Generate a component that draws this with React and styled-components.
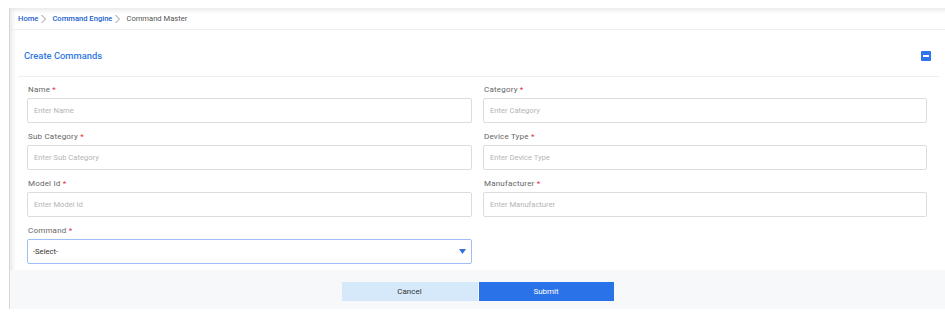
import React from "react";
import styled, { createGlobalStyle } from "styled-components";

const Global = createGlobalStyle`
  html, body { margin: 0; padding: 0; overflow: hidden; background: #fff; }
  * { box-sizing: border-box; }
  body { font-family: Roboto, "Liberation Sans", Arial, sans-serif; }
`;

const Scroller = styled.div`
  height: 100vh;
  overflow-y: scroll;
  &::-webkit-scrollbar { width: 3px; }
  &::-webkit-scrollbar-track { background: #f1f1f1; }
  &::-webkit-scrollbar-thumb { background: #8c8c8c; }
`;

const Page = styled.div`
  min-height: 527px;
  padding: 8px 0 0 9px;
`;

const Panel = styled.div`
  background: #fff;
  border-left: 1px solid #d6d6d6;
  box-shadow: inset 3px 3px 5px -1px rgba(0, 0, 0, 0.1);
`;

const Crumbs = styled.nav`
  height: 22px;
  display: flex;
  align-items: center;
  padding-left: 8px;
  border-bottom: 1px solid #efefef;
  font-size: 7.6px;
  gap: 2px;
`;

const Crumb = styled.span`
  color: ${(p) => (p.$active ? "#555" : "#1d5fd1")};
  font-weight: ${(p) => (p.$active ? 400 : 500)};
`;

const Sep = styled.svg`
  width: 7px;
  height: 10px;
  margin-right: 3px;
`;

const Card = styled.section`
  margin: 0 6px 0 8px;
`;

const CardHead = styled.div`
  display: flex;
  align-items: center;
  justify-content: space-between;
  padding: 19px 8px 13px 6px;
  border-bottom: 1px solid #eeeeee;
`;

const Title = styled.h2`
  margin: 0;
  font-size: 9.4px;
  line-height: 14px;
  font-weight: 500;
  color: #2f78e4;
`;

const Collapse = styled.button`
  width: 10px;
  height: 10px;
  padding: 0;
  border: none;
  border-radius: 1px;
  background: #2f74ec;
  display: flex;
  align-items: center;
  justify-content: center;
  &::after {
    content: "";
    width: 6px;
    height: 1.6px;
    background: #fff;
  }
`;

const Form = styled.div`
  display: grid;
  grid-template-columns: 445px 444px;
  column-gap: 11px;
  row-gap: 7px;
  padding: 6px 9px 6px 9px;
`;

const Field = styled.div`
  display: flex;
  flex-direction: column;
  gap: 3px;
`;

const Label = styled.label`
  font-size: 8px;
  line-height: 12px;
  color: #666;
  font-weight: 400;
  padding: 1px 0 0 1px;
  margin-bottom: -1px;
  letter-spacing: 0.2px;
  & span { color: #e0303a; }
`;

const Input = styled.input`
  height: 25px;
  border: 1px solid #dcdcdc;
  border-radius: 2px;
  padding: 0 6px;
  font-family: inherit;
  font-size: 7.6px;
  color: #333;
  outline: none;
  &::placeholder { color: #b5b5b5; }
`;

const SelectBox = styled.div`
  height: 25px;
  border: 1px solid #9cc0f5;
  border-radius: 2px;
  padding: 0 5px 0 5px;
  display: flex;
  align-items: center;
  justify-content: space-between;
  font-size: 7.6px;
  color: #333;
`;

const Footer = styled.div`
  background: #f7f8fa;
  padding: 12px 0 8px;
  display: flex;
  justify-content: center;
  gap: 1px;
`;

const Button = styled.button`
  width: ${(p) => (p.$primary ? "135px" : "136px")};
  height: 19px;
  border: 1px solid ${(p) => (p.$primary ? "#2a72e8" : "#d6e9fb")};
  background: ${(p) => (p.$primary ? "#2a72e8" : "#d6e9fb")};
  color: ${(p) => (p.$primary ? "#fff" : "#333")};
  font-family: inherit;
  font-size: 8px;
  padding: 0;
`;

const Chevron = () => (
  <Sep viewBox="0 0 7 10">
    <path d="M1.5 1 L5.5 5 L1.5 9" fill="none" stroke="#8a8a8a" strokeWidth="0.9" />
  </Sep>
);

const fields = [
  ["Name", "Enter Name"],
  ["Category", "Enter Category"],
  ["Sub Category", "Enter Sub Category"],
  ["Device Type", "Enter Device Type"],
  ["Model Id", "Enter Model Id"],
  ["Manufacturer", "Enter Manufacturer"],
];

export default function App() {
  return (
    <>
      <Global />
      <Scroller>
        <Page>
          <Panel>
            <Crumbs>
              <Crumb>Home</Crumb>
              <Chevron />
              <Crumb>Command Engine</Crumb>
              <Chevron />
              <Crumb $active>Command Master</Crumb>
            </Crumbs>
            <Card>
              <CardHead>
                <Title>Create Commands</Title>
                <Collapse aria-label="collapse" />
              </CardHead>
              <Form>
                {fields.map(([l, p]) => (
                  <Field key={l}>
                    <Label>
                      {l} <span>*</span>
                    </Label>
                    <Input placeholder={p} />
                  </Field>
                ))}
                <Field>
                  <Label>
                    Command <span>*</span>
                  </Label>
                  <SelectBox>
                    -Select-
                    <svg width="7" height="5" viewBox="0 0 7 5">
                      <path d="M0 0 H7 L3.5 5 Z" fill="#2f6fe0" />
                    </svg>
                  </SelectBox>
                </Field>
              </Form>
            </Card>
            <Footer>
              <Button>Cancel</Button>
              <Button $primary>Submit</Button>
            </Footer>
          </Panel>
        </Page>
      </Scroller>
    </>
  );
}
